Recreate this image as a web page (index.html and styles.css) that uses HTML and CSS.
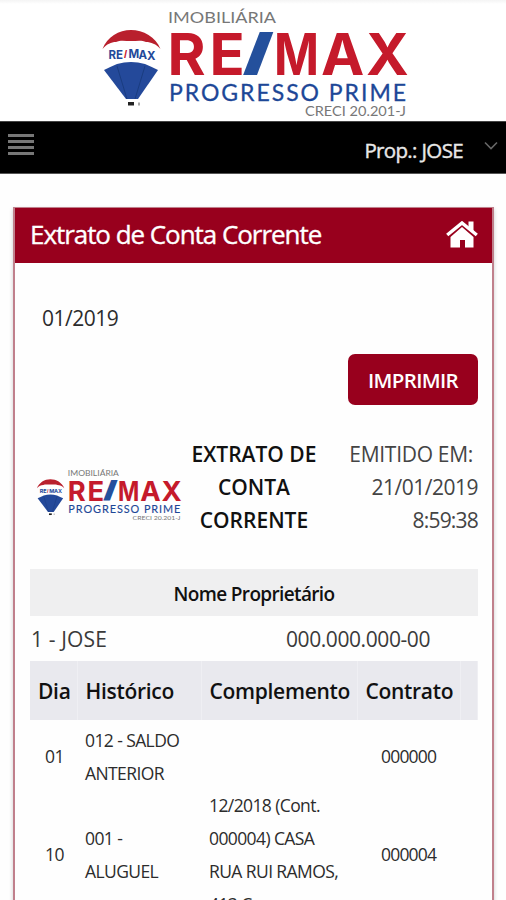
FILE: index.html
```html
<!DOCTYPE html>
<html lang="pt-BR">
<head>
<meta charset="utf-8">
<title>Extrato de Conta Corrente</title>
<link rel="stylesheet" href="styles.css">
</head>
<body>
<svg class="defs" width="0" height="0">
  <symbol id="logo" viewBox="0 0 330 122">
    <path fill="#b9202d" d="M12.500 49C17 37 29 30 41 30s25 7 29.500 19C66 44 61 42 56 42c-4-2-9-1-15-1s-11-1-15 1c-5 0-9 2-13.500 7z"/>
    <path fill="#24499a" d="M14 70q6-3 13-6 14-4 28 0 7 3 13 6L48 99H36z"/>
    <path fill="none" stroke="#173878" stroke-width=".8" d="M27 66l10 33M55 66L45 99"/>
    <path fill="#222" d="M38 102h6v3.500h-6z"/>
    <path fill="#aaa" d="M48 102.500h2v3h-2z"/>
    <g class="brand">
      <text y="59" font-size="11.500" fill="#24499a"><tspan x="18.500 26">RE</tspan><tspan class="slash" fill="#c8202f" x="34" y="58">/</tspan><tspan x="38.500 48.500 57" y="58 58.500 59.500">MAX</tspan></text>
      <text y="75" font-size="58" fill="#c51a2b" x="77.500 119.500">RE</text>
      <text class="slash" transform="translate(152 74) scale(2.050 1)" x="0" y="0" font-size="57" fill="#24509c">/</text>
      <text y="75" font-size="58" fill="#c51a2b"><tspan class="m" x="184" textLength="45" lengthAdjust="spacingAndGlyphs">M</tspan><tspan x="231 276">AX</tspan></text>
    </g>
    <g class="caption">
      <text x="78" y="22.500" font-size="15.500" fill="#777" textLength="108" lengthAdjust="spacingAndGlyphs">IMOBILIÁRIA</text>
      <text x="79" y="101" font-size="23" fill="#1d4797" stroke="#1d4797" stroke-width=".3" textLength="237" lengthAdjust="spacing">PROGRESSO PRIME</text>
      <text x="215" y="116" font-size="12.500" fill="#777" textLength="101" lengthAdjust="spacingAndGlyphs">CRECI 20.201-J</text>
    </g>
  </symbol>
</svg>

<header class="brand-bar">
  <svg class="logo-large"><use href="#logo"/></svg>
</header>

<nav class="nav">
  <span class="menu"><i></i><i></i><i></i><i></i></span>
  <span class="user">Prop.: JOSE</span>
  <svg class="chevron" viewBox="0 0 14 10"><path d="M1 1.500l6 6 6-6" fill="none" stroke="#666" stroke-width="1.600"/></svg>
</nav>

<main class="panel">
  <div class="panel-head">
    <h1>Extrato de Conta Corrente</h1>
    <svg class="home" viewBox="0 0 32 27"><path fill="#fff" d="M4.500 16L16 6l11.500 10v10.500H19V19h-5v7.500H4.500z"/><path fill="none" stroke="#98001d" stroke-width="1" d="M3 15.500L16 4.500l13 11"/><path fill="none" stroke="#fff" stroke-width="3.400" d="M1.200 14L16 2 30.800 14"/><path fill="#fff" d="M22.500 .5H27.500v10l-5-4.500z"/></svg>
  </div>
  <div class="panel-body">
    <div class="period">01/2019</div>
    <div class="actions"><button>IMPRIMIR</button></div>
    <section class="summary">
      <svg class="logo-small"><use href="#logo"/></svg>
      <h2>EXTRATO DE<br>CONTA<br>CORRENTE</h2>
      <div class="issued"><span class="lead">EMITIDO EM:</span><br>21/01/2019<br><span class="time">8:59:38</span></div>
    </section>
    <div class="owner-head">Nome Proprietário</div>
    <div class="owner"><span class="owner-name">1 - JOSE</span><span class="owner-doc">000.000.000-00</span></div>
    <table>
      <colgroup><col class="c-day"><col class="c-hist"><col class="c-comp"><col class="c-contract"><col></colgroup>
      <thead><tr><th>Dia</th><th>Histórico</th><th>Complemento</th><th>Contrato</th><th></th></tr></thead>
      <tbody>
        <tr class="first"><td>01</td><td>012 - SALDO<br>ANTERIOR</td><td></td><td>000000</td><td></td></tr>
        <tr><td>10</td><td>001 -<br>ALUGUEL</td><td>12/2018 (Cont.<br>000004) CASA<br>RUA RUI RAMOS,<br>413 C</td><td>000004</td><td></td></tr>
      </tbody>
    </table>
  </div>
</main>
</body>
</html>
```

FILE: styles.css
```css
* { box-sizing: border-box; }
html, body { height: 900px; overflow: hidden; }
body { margin: 0; background: #fefefe; color: #2c2c2c; font-family: "Open Sans", "Noto Sans", sans-serif; }
.defs { display: block; }
.brand text { font-family: Inter, sans-serif; font-weight: 700; }
.brand .slash { font-family: "Liberation Sans", sans-serif; }
.brand .m { font-size: 58px; }
.caption text { font-family: Lato, sans-serif; }

.brand-bar { height: 121px; padding-left: 90px; background: linear-gradient(#f4f4f4, #fff 4px); }
.logo-large { display: block; width: 330px; height: 122px; }

.nav { display: flex; height: 53px; padding: 0 8px; background: #000; border-bottom: 1px solid #555; border-top: 1px solid #444; }
.menu { display: flex; flex-direction: column; gap: 3px; width: 26px; margin-top: 12px; }
.menu i { height: 3px; background: #777; }
.user { margin-left: auto; margin-top: 13px; font-size: 20.500px; line-height: 30px; color: #e8e8e8; letter-spacing: -.65px; -webkit-text-stroke: .4px #e8e8e8; }
.chevron { width: 14px; height: 10px; margin: 19px 0 0 21px; }

.panel { width: 481px; height: 710px; margin: 33px 0 0 13px; border: 2px solid #c0808c; border-top: 1px solid #c0808c; box-shadow: 0 2px 4px #ccc; }
.panel-head { display: flex; align-items: center; justify-content: space-between; height: 55px; padding: 0 14px 3px 15px; background: #98001d; color: #fff; }
h1 { margin: 0; font-size: 26px; font-weight: 400; letter-spacing: -1.050px; -webkit-text-stroke: .35px #fff; }
.home { width: 32px; height: 27px; }
.panel-body { padding: 0 14px 0 15px; }
.period { height: 91px; padding: 39px 0 0 12px; font-size: 21px; line-height: 32px; letter-spacing: -.5px; }
.actions { display: flex; justify-content: flex-end; }
button { width: 130px; height: 51px; padding: 0; border: 0; border-radius: 7px; background: #98001d; color: #fff; font: 600 20.500px "Open Sans", sans-serif; letter-spacing: -.65px; }

.summary { display: flex; margin-top: 33px; height: 131px; font-size: 21px; line-height: 33px; }
.logo-small { flex: none; width: 156px; height: 58px; margin: 27px 0 0 1px; }
h2 { flex: none; width: 134px; margin: 0; font-size: 21px; font-weight: 600; line-height: 33px; text-align: center; white-space: nowrap; color: #111; }
.issued { flex: 1; text-align: right; white-space: nowrap; color: #444; letter-spacing: -.5px; }
.lead { margin-right: 5px; letter-spacing: -.3px; }
.time { letter-spacing: -.800px; }

.owner-head { height: 47px; background: #efeff0; font-size: 19px; font-weight: 600; line-height: 50px; text-align: center; color: #111; letter-spacing: -.65px; }
.owner { display: flex; height: 45px; font-size: 21px; line-height: 47px; color: #3a3a3a; }
.owner-name { width: 256px; padding-left: 1px; letter-spacing: .15px; }
.owner-doc { letter-spacing: -.42px; }

table { width: 448px; table-layout: fixed; border-collapse: collapse; }
.c-day { width: 47px; }
.c-hist { width: 124px; }
.c-comp { width: 156px; }
.c-contract { width: 103px; }
th { height: 59px; padding: 0 0 0 8px; background: #e9e9ee; border-right: 1px solid #efeff3; font-size: 21px; font-weight: 600; text-align: left; color: #111; white-space: nowrap; letter-spacing: -.3px; }
td { padding: 0 0 0 8px; font-size: 17.500px; line-height: 32.700px; white-space: nowrap; vertical-align: middle; letter-spacing: -.6px; }
.first td { padding-top: 4px; }
td:nth-child(1) { padding-left: 15px; letter-spacing: -.6px; }
td:nth-child(4) { padding-left: 24px; letter-spacing: -.800px; }
```
